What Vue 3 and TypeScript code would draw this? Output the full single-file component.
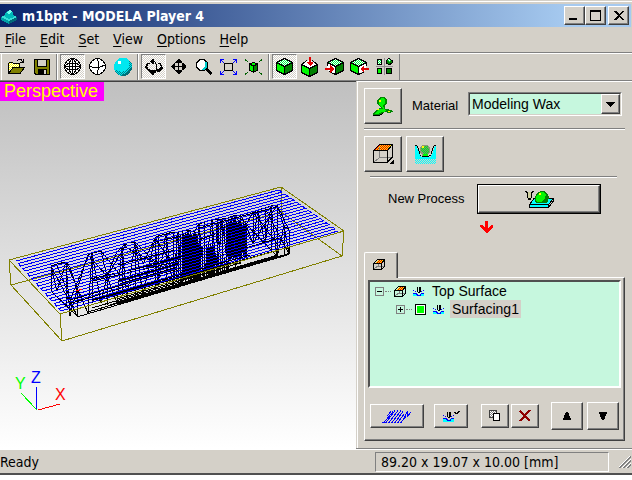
<script setup lang="ts">
import { h, ref } from 'vue'
import type { FunctionalComponent } from 'vue'

type Shape = [d: string, fill?: string, stroke?: string, width?: number]
interface IconDef { w: number; hgt: number; shapes: Shape[] }

const K = '#000'
const G = '#00f800'
const D = '#008000'

const cube: Shape[] = [
  ['M8 0L16 4V12L8 16L0 12V4Z', G],
  ['M8 8L16 4V12L8 16Z', D],
  ['M8 0L16 4L8 8L0 4Z', 'url(#dither-green)'],
  ['M8.5 .5L16.5 4.5V12.5L8.5 16.5L.5 12.5V4.5ZM.5 4.5L8.5 8.5L16.5 4.5M8.5 8.5V16', 'none', K],
]
const globe: Shape[] = [
  ['M7 .5H10L14 3L16.5 7V10L14 14L10 16.5H7L3 14L.5 10V7L3 3Z', '#fff', K],
]
const stockBox: Shape[] = [
  ['M1 5L5 1H12L9 5Z', 'url(#dither-red)'],
  ['M1 10L5 7H11M5 7V4', 'none', '#808080'],
  ['M.5 4.5L4.5 .5H11.5L8.5 4.5ZM.5 4.5V10.5H8.5V4.5M8.5 10.5L11.5 7.5V.5', 'none', K],
]
const toolCut: Shape[] = [
  ['M0 6H3L5 8H7L9 6H11V9H0Z', '#0ff'],
  ['M0 3.5H1M2 4.5H3M10 3.5H11M8 4.5H9M0 6.5H3L5 8.5H7L8.5 6.5H11', 'none', '#00f'],
  ['M4.5 0V5M5 5.5H7M7.5 0V5M6 0V5', 'none', K],
]

const icons: Record<string, IconDef> = {
  app: { w: 16, hgt: 16, shapes: [
    ['M0 9L7 6L16 9V12L8 16L0 12Z', '#00a0a8'], ['M0 9L7 6L16 9L8 13Z', '#38e0d8'],
    ['M3 8L5 4L9 2L12 5L13 9L8 11Z', '#00b8b8'], ['M5 5L9 2L11 4L8 6Z', '#70fff0'],
    ['M8 13V16L16 12V9Z', '#006878'],
  ] },
  open: { w: 17, hgt: 15, shapes: [
    ['M1 4H5L6 5H11V8H5L1 13Z', 'url(#dither-yellow)'], ['M5 9H16L12 14H1Z', '#808000'],
    ['M.5 14V4.5L1.5 3.5H4.5L5.5 4.5H11.5V8M.5 14.5L5 8.5H16.5L12 14.5ZM9 1.5L11 .5H13L15.5 3.5M15.5 0V4M12 3.5H16', 'none', K],
  ] },
  save: { w: 16, hgt: 16, shapes: [
    ['M0 0H16V16H1L0 15Z', K], ['M1 1H15V15H2L1 14Z', '#808000'], ['M3 0H13V8H3Z', K], ['M4 1H12V7H4Z', '#d4d0c8'],
    ['M4 10H13V16H4Z', K], ['M10 11H12V15H10Z', '#d4d0c8'],
  ] },
  globeWire: { w: 17, hgt: 17, shapes: [...globe,
    ['M8.5 0V17M0 8.5H17M8 1L5.5 4V13L8 16M9 1L11.5 4V13L9 16M1 8L4 5.5H13L16 8M1 9L4 11.5H13L16 9', 'none', K]] },
  globePlain: { w: 17, hgt: 17, shapes: [...globe,
    ['M8 1L9.5 4V10L8 16M1 8L4 9.5H10L16 7', 'none', K]] },
  sphere: { w: 18, hgt: 18, shapes: [
    ['M6 0H12L16 3L18 7V11L15 16L11 18H7L2 15L0 11V7L2 3Z', '#00e8f0'],
    ['M18 5V11L15 16L11 18H7L2 15L1 12L7 14L12 12L15 8V3Z', 'url(#dither-teal)'],
    ['M18 8V11L15 16L11 18H7L10 16L14 14L17 9Z', '#007078'], ['M4 3H7V6H4Z', '#fff'],
  ] },
  rotate: { w: 18, hgt: 16, shapes: [
    ['M3 5.5H2L.5 7.5V8.5L3 10.5L7 11.5H11L14 10.5L16.5 8.5V7.5L15 5.5M8 1.5L10.5 3.5L11.5 6V10L10.5 13L8 14.5', 'none', K],
    ['M3 6H2L1 8L4 11L7 12H11L14 11L17 8L16 6', 'none', K],
    ['M0 8H3V11H6V13H4L0 9ZM18 8H15V11H12V13H14L18 9ZM9 0V5H8L5 2.5L8 0ZM9 16V11H8L5 13.5L8 16Z', K],
    ['M2 4H5V5H2ZM13 4H16V5H13Z', K],
  ] },
  move: { w: 15, hgt: 15, shapes: [
    ['M7 2H8V13H7ZM2 7H13V8H2Z', K],
    ['M7 0H8L11 3V4H4V3ZM7 15H8L11 12V11H4V12ZM0 7V8L3 11H4V4H3ZM15 7V8L12 11H11V4H12Z', K],
    ['M4 4H6V6H4ZM9 4H11V6H9ZM4 9H6V11H4ZM9 9H11V11H9Z', '#d4d0c8']] },
  magnify: { w: 16, hgt: 16, shapes: [
    ['M4 .5H8L11.5 4V8L8 11.5H4L.5 8V4Z', '#fff', K], ['M9 3H11V8L8 11H5L9 8Z', '#0cc'],
    ['M11 9L16 13V15L14 16L10 12Z', K],
  ] },
  fit: { w: 17, hgt: 16, shapes: [
    ['M4.5 4.5H12.5V11.5H4.5Z', 'none', K],
    ['M.5 4V.5H4M1 1L4 4M13 .5H16.5V4M16 1L13 4M.5 12V15.5H4M1 15L4 12M13 15.5H16.5V12M16 15L13 12', 'none', '#00f'],
  ] },
  fitObject: { w: 17, hgt: 16, shapes: [
    ['M4 5L9 3L13 5V11L9 13L4 11Z', G], ['M9 7L13 5V11L9 13Z', D],
    ['M4.5 5L8.5 3.5L12.5 5V11L8.5 13.5L4.5 11ZM4.5 5L8.5 7L12.5 5M8.5 7V13', 'none', K],
    ['M0 1.5H2M.5 0V2M15 1.5H17M16.5 0V2M0 14.5H2M.5 14V16M15 14.5H17M16.5 14V16M2 2.5H3M14 2.5H15M2 13.5H3M14 13.5H15', 'none', '#006000'],
  ] },
  cube: { w: 17, hgt: 17, shapes: cube },
  cubeTop: { w: 17, hgt: 20, shapes: [
    ['M8 3L16 7V15L8 19L0 15V7Z', G], ['M8 11L16 7V15L8 19Z', D], ['M8 3L16 7L8 11L0 7Z', '#fff'],
    ['M6 3.5L.5 7.5V15.5L8.5 19.5L16.5 15.5V7.5L11 3.5M.5 7.5L8.5 11.5L16.5 7.5M8.5 11.5V19', 'none', K],
    ['M8 0H10V5H12V6L9 9L6 6V5H8Z', '#e00000'],
  ] },
  cubeFront: { w: 19, hgt: 17, shapes: [
    ['M10 0L18 4L10 8L2 4Z', 'url(#dither-green)'], ['M2 5L10 8V16L2 12Z', '#fff'], ['M10 8L18 4V12L10 16Z', D],
    ['M2.5 8V4.5L10.5 .5L18.5 4.5V12.5L10.5 16.5L4 13.5M2.5 4.5L10.5 8.5L18.5 4.5M10.5 8.5V16', 'none', K],
    ['M0 10H5V7L9 11L5 15V12H0Z', '#e00000'],
  ] },
  cubeSide: { w: 19, hgt: 17, shapes: [
    ['M8 0L16 4L8 8L0 4Z', 'url(#dither-green)'], ['M0 4L8 8V16L0 12Z', G], ['M8 8L16 4V12L8 16Z', '#fff'],
    ['M16.5 8V4.5L8.5 .5L.5 4.5V12.5L8.5 16.5L14 14M.5 4.5L8.5 8.5L16.5 4.5M8.5 8.5V16', 'none', K],
    ['M19 10H14V7L10 11L14 15V12H19Z', '#e00000'],
  ] },
  quad: { w: 17, hgt: 17, shapes: [
    ['M1.5 1.5H5.5V6.5H1.5Z', 'url(#dither-green)', K], ['M1.5 10.5H5.5V15.5H1.5Z', G, K], ['M10.5 10.5H15.5V15.5H10.5Z', D, K],
    ['M10.5 2.5L13 .5L16 2.5V5L13 7L10.5 5Z', D, K], ['M11 2L13 1L15 2L13 4Z', 'url(#dither-green)'],
    ['M8.5 0V17M0 8.5H17', 'none', '#909090'],
  ] },
  model: { w: 20, hgt: 19, shapes: [
    ['M0 17L4 12L8 11L7 9L4 7V3L7 0H11L14 3V6L12 9V12L19 13L20 15L16 16L11 15L9 17L4 19H0Z', '#008800'],
    ['M2 16L6 12H10L9 10L6 8V3L8 1H11L12 3V7L10 8L11 12L14 14L9 15L5 17H1Z', G],
    ['M6 3H8V5H6Z', '#ff0'], ['M4 12H6V13H4ZM15 14H17V15H15Z', '#ff0'], ['M0 18.5H6L10 16.5', 'none', K],
  ] },
  surface: { w: 21, hgt: 20, shapes: [
    ['M7 0H20L15 6H1Z', 'url(#dither-red)'], ['M6.5 3V13.5H19M6 14L1 18', 'none', '#808080'],
    ['M.5 6.5L6.5 .5H19.5L14.5 6.5ZM.5 6.5V18.5H14.5V6.5M14.5 18L19.5 13V.5', 'none', K],
    ['M21 15V20H16Z', K],
  ] },
  carve: { w: 21, hgt: 19, shapes: [
    ['M0 0H1L5 10H6V12H16V10H17L20 0H21V14H0Z', '#0ff'], ['M0 14H21V19H0Z', 'url(#dither-cyan)'],
    ['M7 0H13L15 3V7L13 10V12H7V10L5 7V3Z', '#909878'], ['M8 1H13L14 4V7L11 10L6 6V3Z', 'url(#dither-leaf)'],
    ['M8 9H13V12H8Z', G], ['M7 1H9V3H7Z', '#ff0'],
    ['M0 .5H2M2.5 1V3M3.5 3V6M4.5 6V9M5 10.5H6M6.5 11H14M14 10.5H16M16.5 6V9M17.5 3V6M18.5 1V3M19 .5H21', 'none', K],
  ] },
  newProcess: { w: 29, hgt: 17, shapes: [
    ['M4 13L9 8H28L24 13V16H4Z', '#0ff'],
    ['M4.5 13.5L9 7.5H28.5V10L23.5 16.5H4.5ZM4 13.5H23.5V16M24 13L28 8', 'none', K],
    ['M10 11V6L12 2L16 0H19L22 2L24 6L23 11L20 12H12Z', D],
    ['M11 9V6L13 3L16 1H19L21 4L20 7L16 11H12Z', G], ['M14 2H16V4H14Z', '#ff0'],
    ['M2 1H7V7H5L3 8Z', '#d0d0a0'], ['M0 .5H2M7 .5H9M2.5 1V7M6.5 1V7M3 7.5H6M1 1.5H2M7 1.5H8M3 8.5H6', 'none', K],
  ] },
  arrow: { w: 13, hgt: 12, shapes: [['M5 0H8V7L11 4H13V6L7 12H6L0 6V4H2L5 7Z', '#f00']] },
  stock: { w: 12, hgt: 11, shapes: stockBox },
  cut: { w: 11, hgt: 9, shapes: toolCut },
  path: { w: 30, hgt: 13, shapes: [
    ['M0 12.5H2L11 1.5M3 12.5H4L13 .5M6 12.5H7L16 .5M9 12.5H10L19 .5M12 12.5H13L21 1.5M15 12.5H16L22 4M18 12.5H19L22 8.5L24 6.5M22 7.5L25 2.5V7L29 2M5 6L9 1.5', 'none', '#00f']] },
  cutCheck: { w: 17, hgt: 12, shapes: [
    ['M0 8H3L5 10H7L9 8H11V12H0Z', '#0ff'],
    ['M0 5.5H1M2 6.5H3M10 5.5H11M8 6.5H9M0 8.5H3L5 10.5H7L8.5 8.5H11', 'none', '#00f'],
    ['M4.5 2V7M5 7.5H7M7.5 2V7M6 2V7', 'none', K], ['M11 2H12L13 3L15 1H17L14 4H12L11 3Z', K],
  ] },
  copy: { w: 12, hgt: 12, shapes: [['M.5 .5H7.5V7.5H.5Z', 'url(#dither-dark)', '#404040'], ['M4.5 3.5H10.5V10.5H4.5Z', '#fff', K]] },
  remove: { w: 12, hgt: 12, shapes: [['M1 1L11 11M11 0L1 11', 'none', '#900000', 2]] },
  up: { w: 8, hgt: 8, shapes: [['M3 0H5L8 7V8H0V7Z', K]] },
  down: { w: 8, hgt: 8, shapes: [['M3 8H5L8 1V0H0V1Z', K]] },
  drop: { w: 9, hgt: 5, shapes: [['M0 0H9L5 5H4Z', K]] },
  min: { w: 8, hgt: 9, shapes: [['M0 7H8V9H0Z', K]] },
  max: { w: 11, hgt: 11, shapes: [['M.5 .5H10.5V10.5H.5Z', 'none', K], ['M0 0H11V2H0Z', K]] },
  close: { w: 10, hgt: 9, shapes: [['M0 0H2L5 3L8 0H10V1L6 4V5L10 8V9H8L5 6L2 9H0V8L4 5V4L0 1Z', K]] },
  grip: { w: 12, hgt: 12, shapes: [
    ['M0 12L12 0M4 12L12 4M8 12L12 8', 'none', '#808080', 2], ['M-1 12L12 -1M3 12L12 3M7 12L12 7', 'none', '#fff', 1]] },
}

const Icon: FunctionalComponent<{ name: string }> = ({ name }) => {
  const def = icons[name]
  return h('svg', { width: def.w, height: def.hgt, viewBox: `0 0 ${def.w} ${def.hgt}`, class: 'icon', 'aria-hidden': 'true' },
    def.shapes.map(([d, fill = 'none', stroke, width = 1]) =>
      h('path', { d, fill, stroke: stroke ?? 'none', 'stroke-width': width })))
}
Icon.props = ['name']

const menus = ['File', 'Edit', 'Set', 'View', 'Options', 'Help']

interface Tool { icon: string; label: string; on?: boolean }
const toolGroups: Tool[][] = [
  [{ icon: 'open', label: 'Open' }, { icon: 'save', label: 'Save' }],
  [{ icon: 'globeWire', label: 'Wireframe', on: true }, { icon: 'globePlain', label: 'Hidden line' }, { icon: 'sphere', label: 'Shaded' }],
  [{ icon: 'rotate', label: 'Rotate', on: true }, { icon: 'move', label: 'Move' }, { icon: 'magnify', label: 'Zoom' },
    { icon: 'fit', label: 'Fit table' }, { icon: 'fitObject', label: 'Fit object' }],
  [{ icon: 'cube', label: 'Perspective view', on: true }, { icon: 'cubeTop', label: 'Top view' }, { icon: 'cubeFront', label: 'Front view' },
    { icon: 'cubeSide', label: 'Side view' }, { icon: 'quad', label: 'All views' }],
]

const material = ref('Modeling Wax')
const enabled = ref(true)

type Pt = [number, number]
const lerp = (a: Pt, b: Pt, t: number): Pt => [a[0] + (b[0] - a[0]) * t, a[1] + (b[1] - a[1]) * t]

// Back-and-forth finishing pass over the top face.
function toolPath(count: number): string {
  const out: string[] = []
  for (let i = 0; i < count; i++) {
    const t = i / (count - 1)
    const l = lerp([16, 261], [61, 311], t)
    const r = lerp([279, 190], [338, 231], t)
    const ends = i % 2 ? [r, l] : [l, r]
    out.push(...ends.map((p) => p.map((n) => n.toFixed(1)).join(' ')))
  }
  return 'M' + out.join('L')
}
const bluePath = toolPath(21)

// Lower edge of the relief at a given x.
const base = (x: number): number => Math.round(317 - (x - 77) * 0.295)

// Triangulated relief: columns of [x, top, bottom].
const columns: number[][] = [
  [51, 266, 291], [57, 264, 291], [66, 262, 307], [70, 267, 316], [77, 289, 316], [88, 255, 313], [92, 253, 303], [101, 251, 303],
  [107, 276, 305], [117, 252, 303], [122, 247, 296], [127, 243, 298], [135, 242, 297], [143, 264, 295], [155, 238, 291],
  [158, 236, 285], [166, 234, 288], [173, 232, 288], [178, 232, 288], [182, 231, 285], [188, 230, 284], [194, 232, 282],
  [199, 224, 281], [204, 222, 279], [212, 220, 277], [217, 219, 275], [222, 219, 272], [228, 218, 269], [235, 215, 268],
  [240, 215, 264], [246, 225, 260], [253, 212, 243], [258, 210, 240], [265, 208, 244], [271, 206, 250], [277, 205, 257], [284, 226, 254], [289, 230, 254],
]
function meshPath(): string {
  const seg: string[] = []
  columns.forEach(([x, top, bottom], i) => {
    if (i % 2 === 0 || x > 150) seg.push(`M${x}.5 ${top}V${bottom}`)
    const next = columns[i + 1]
    if (!next) return
    seg.push(`M${x} ${top}L${next[0]} ${next[1]}`)
    seg.push(i % 2 ? `M${x} ${bottom}L${next[0]} ${next[1]}` : `M${x} ${top}L${next[0]} ${next[2]}`)
  })
  return seg.join('')
}

// Curved bodies of the relief, where facets are only a pixel or two wide: [from, to, top, height, step].
const dense: number[][] = [
  [176, 182, 234, 50, 2], [183, 197, 232, 50, 1], [198, 206, 242, 38, 2], [206, 214, 244, 34, 1],
  [216, 224, 221, 24, 2], [226, 237, 219, 42, 1], [238, 246, 221, 36, 1], [216, 226, 254, 20, 2],
]
function densePath(): string {
  const seg: string[] = []
  for (const [from, to, top, height, step] of dense) {
    for (let x = from; x <= to; x += step) {
      const k = (x * 7) % 5
      seg.push(`M${x}.5 ${top + k}V${Math.min(top + height - k, base(x))}`)
    }
  }
  return seg.join('')
}
const mesh = meshPath() + densePath()
const rails = 'M70 300L180 268L279 238M72 303L180 270M90 279L180 259M92 281L180 261M100 278L178 257M77 317L289 254'
  + 'M88 312L200 279M117 302L278 255M89 303L289 247M90 300L250 255M110 305L278 256M117 299L240 263M92 308L180 282'
  + 'M51 266L77 316M57 265L76 314M66 262L88 313M51 291L77 316M88 255L107 276L127 243M101 251L121 276M135 242L155 262M155 238L173 265'
  + 'M235 215L253 243L277 205M240 218L278 257M265 208L289 254M253 212L278 245M289 230V254L278 257M277 205L289 230M88 257L70 300'
  + 'M125 247L155 263M118 265L175 250M155 242L180 236M199 228L246 215L277 207M199 240L225 230'
const spineRails = 'M118 281L178 264M120 284L176 268M92 300L190 274M117 304L210 277L289 254M150 267L200 250'
</script>

<template>
  <div class="window">
    <svg class="defs" aria-hidden="true">
      <defs>
        <pattern v-for="[id, a, b] in [
          ['green', '#ffffff', '#00f848'], ['yellow', '#ffff00', '#ffffff'], ['red', '#e80000', '#ffe800'],
          ['cyan', '#00ffff', '#d4d0c8'], ['teal', '#00e8f0', '#008088'], ['leaf', '#00e030', '#70a058'], ['dark', '#808080', '#ffffff'],
        ]" :id="`dither-${id}`" :key="id" width="2" height="2" patternUnits="userSpaceOnUse">
          <rect width="2" height="2" :fill="a" />
          <path d="M0 0h1v1h-1zM1 1h1v1h-1z" :fill="b" />
        </pattern>
      </defs>
    </svg>

    <header class="titlebar">
      <Icon name="app" />
      <h1>m1bpt - MODELA Player 4</h1>
      <div class="caption">
        <button type="button" class="raised cap cap-min" aria-label="Minimize"><Icon name="min" /></button>
        <button type="button" class="raised cap" aria-label="Maximize"><Icon name="max" /></button>
        <button type="button" class="raised cap cap-close" aria-label="Close"><Icon name="close" /></button>
      </div>
    </header>

    <nav class="menubar">
      <button v-for="m in menus" :key="m" type="button"><u>{{ m[0] }}</u>{{ m.slice(1) }}</button>
    </nav>

    <div class="toolbar" role="toolbar">
      <div v-for="(group, i) in toolGroups" :key="i" class="group">
        <button v-for="t in group" :key="t.icon" type="button" :class="{ on: t.on }" :aria-label="t.label"><Icon :name="t.icon" /></button>
      </div>
    </div>

    <main class="work">
      <section class="viewport">
        <span class="view-name">Perspective</span>
        <svg class="scene" viewBox="0 82 356 366" preserveAspectRatio="xMinYMin meet" role="img" aria-label="Model">
          <g fill="none" stroke-width="1">
            <path stroke="#808000" d="M11 285L281 212L342 256M281.5 187V212" />
            <path stroke="#000" :d="mesh" />
            <path stroke="#000" :d="rails" />
            <path stroke="#000" stroke-width="2" :d="spineRails" />
            <path stroke="#00f" :d="bluePath" />
            <path stroke="#808000" d="M9 260L281 187L344 231L60 314ZM9 260L11 285L62 341L342 256L344 231M60 314L62 341" />
            <path stroke="#f00" d="M76 291L82 289" />
            <path stroke="#00f" d="M36.5 410V387" />
            <path stroke="#0f0" d="M37 410L21 393" />
            <path stroke="#f00" d="M38 410L60 404" />
          </g>
          <text x="55" y="400" fill="#f00">X</text>
          <text x="15" y="389" fill="#0f0">Y</text>
          <text x="31" y="383" fill="#00f">Z</text>
        </svg>
      </section>

      <section class="panel">
        <div class="row material">
          <button type="button" class="raised tile" aria-label="Model"><Icon name="model" /></button>
          <label for="material">Material</label>
          <div class="combo">
            <select id="material" v-model="material"><option>Modeling Wax</option></select>
            <span class="raised combo-arrow"><Icon name="drop" /></span>
          </div>
        </div>
        <hr>
        <div class="row sides">
          <button type="button" class="raised tile" aria-label="Surface"><Icon name="surface" /></button>
          <button type="button" class="raised tile" aria-label="Cutting area"><Icon name="carve" /></button>
        </div>
        <hr class="short">
        <div class="row process">
          <label for="new-process">New Process</label>
          <button id="new-process" type="button" class="new-process"><span class="raised"><Icon name="newProcess" /></span></button>
        </div>
        <div class="flow-arrow"><Icon name="arrow" /></div>

        <button type="button" class="tab" role="tab" aria-selected="true" aria-label="Top Surface"><Icon name="stock" /></button>
        <div class="page">
          <ul class="tree" role="tree">
            <li role="treeitem">
              <button type="button" class="toggle minus" aria-label="Collapse"></button>
              <i class="dots"></i>
              <Icon name="stock" /><Icon name="cut" />
              <span class="node">Top Surface</span>
            </li>
            <li role="treeitem" class="child">
              <button type="button" class="toggle" aria-label="Expand"></button>
              <i class="dots"></i>
              <input v-model="enabled" type="checkbox" aria-label="Surfacing1">
              <Icon name="cut" />
              <span class="node selected">Surfacing1</span>
            </li>
          </ul>
          <div class="actions">
            <button type="button" class="raised wide" aria-label="Preview"><Icon name="path" /></button>
            <button type="button" class="raised mid" aria-label="Edit process"><Icon name="cutCheck" /></button>
            <div class="pair">
              <button type="button" class="raised small" aria-label="Copy"><Icon name="copy" /></button>
              <button type="button" class="raised small" aria-label="Delete"><Icon name="remove" /></button>
            </div>
            <div class="pair order">
              <button type="button" class="raised tall" aria-label="Move up"><Icon name="up" /></button>
              <button type="button" class="raised tall" aria-label="Move down"><Icon name="down" /></button>
            </div>
          </div>
        </div>
      </section>
    </main>

    <footer class="status">
      <span>Ready</span>
      <span class="pane">89.20 x 19.07 x 10.00 [mm]</span>
      <Icon name="grip" />
    </footer>
  </div>
</template>

<style>
body { background: #fff; }
</style>

<style scoped>
* { box-sizing: border-box; }
.window {
  display: grid;
  grid-template-rows: 23px 25px 29px 1fr 26px;
  min-height: calc(100vh - 5px);
  padding-top: 4px;
  background: linear-gradient(#d4d0c8 1px, #fff 1px, #fff 2px, #d4d0c8 2px);
  color: #000;
  font-family: "DejaVu Sans Condensed", "DejaVu Sans", sans-serif;
  font-size: 14px;
}
.defs { position: absolute; width: 0; height: 0; }
.icon { display: block; flex: none; shape-rendering: crispEdges; }
button { padding: 0; border: 0; background: none; font: inherit; color: inherit; }
.raised {
  display: flex;
  align-items: center;
  justify-content: center;
  background: #d4d0c8;
  border: 1px solid;
  border-color: #fff #404040 #404040 #fff;
  box-shadow: inset -1px -1px #808080;
}
.titlebar {
  display: flex;
  align-items: center;
  margin-right: 1px;
  padding: 0 2px 0 1px;
  gap: 5px;
  background: linear-gradient(90deg, #0a246a, #a6caf0 90%);
  color: #fff;
}
.titlebar h1 { margin: 0; flex: 1; font-size: 14px; line-height: 20px; font-weight: bold; white-space: nowrap; }
.caption { display: flex; }
.cap { width: 21px; height: 19px; }
.cap-min { padding-right: 3px; }
.cap-close { margin-left: 2px; }
.menubar { display: flex; align-items: center; gap: 14px; padding: 0 0 2px 5px; line-height: 20px; }
.menubar u { text-underline-offset: 2px; }
.toolbar {
  display: flex;
  border-top: 1px solid #808080;
  border-bottom: 1px solid #808080;
  box-shadow: inset 0 1px #fff;
  padding: 1px 0 0 1px;
}
.group { display: flex; padding: 0 2px; border-right: 1px solid #808080; border-left: 1px solid #fff; }
.toolbar button { display: flex; align-items: center; justify-content: center; width: 25px; height: 25px; border: 1px solid transparent; }
.toolbar .on {
  border-color: #808080 #fff #fff #808080;
  background: repeating-conic-gradient(#fff 0 25%, #d4d0c8 0 50%) 0 0 / 2px 2px;
}
.work { display: grid; grid-template-columns: 1fr 275px; min-height: 0; }
.viewport {
  position: relative;
  margin-right: 1px;
  border-top: 1px solid #404040;
  background: linear-gradient(#c0c0c0, #fff);
}
.view-name {
  position: absolute;
  top: 0;
  left: 0;
  padding: 0 6px 0 4px;
  background: #f0f;
  color: #ff0;
  font: 18px/19px "Liberation Sans", sans-serif;
}
.scene { display: block; width: 100%; shape-rendering: crispEdges; font: 16px "Liberation Sans", sans-serif; }
.panel {
  display: flex;
  flex-direction: column;
  padding: 6px 7px 8px 6px;
  border-left: 1px solid #fff;
  border-top: 1px solid #fff;
  font: 13px/18px "Liberation Sans", sans-serif;
}
.row { display: flex; align-items: center; }
.tile { width: 38px; height: 36px; }
.material label { margin-left: 10px; width: 56px; }
.combo {
  position: relative;
  flex: 1;
  display: flex;
  height: 24px;
  margin: 0 3px 4px 0;
  border: 1px solid;
  border-color: #808080 #fff #fff #808080;
}
.combo select {
  appearance: none;
  width: 100%;
  padding: 0 20px 0 2px;
  border: 1px solid;
  border-color: #404040 #d4d0c8 #d4d0c8 #404040;
  border-radius: 0;
  background: #c6f7de;
  color: #000;
  font: 14px/18px "Liberation Sans", sans-serif;
}
.combo-arrow { position: absolute; top: 1px; right: 1px; width: 19px; height: 20px; pointer-events: none; }
hr { width: 100%; height: 2px; margin: 4px 0 6px; border: 0; border-top: 1px solid #808080; border-bottom: 1px solid #fff; }
.sides { gap: 4px; }
.short { width: auto; margin: 4px 8px 6px 6px; }
.process { padding: 0 24px 0 24px; gap: 10px; }
.process label { width: 79px; white-space: nowrap; }
.new-process { display: flex; flex: 1; height: 30px; border: 1px solid #000; }
.new-process .raised { width: 100%; height: 100%; }
.flow-arrow { padding: 7px 0 0 116px; height: 38px; }
.tab {
  position: relative;
  display: flex;
  justify-content: center;
  align-items: center;
  width: 34px;
  height: 26px;
  margin-bottom: -1px;
  padding: 0 4px 3px 0;
  border: 1px solid;
  border-color: #fff #404040 transparent #fff;
  border-bottom: 0;
  border-radius: 2px 2px 0 0;
  box-shadow: inset -1px 0 #808080;
  background: #d4d0c8;
}
.page {
  display: flex;
  flex: 1;
  flex-direction: column;
  padding: 2px 3px 10px;
  border: 1px solid;
  border-color: #fff #404040 #404040 #fff;
  box-shadow: inset -1px -1px #808080;
}
.tree {
  flex: 1;
  margin: 0;
  padding: 0 0 0 5px;
  list-style: none;
  border: 2px solid;
  border-color: #505050 #fff #fff #505050;
  background: #c6f7de;
}
.tree li { display: flex; align-items: center; height: 18px; }
.tree .child { padding-left: 21px; }
.toggle {
  width: 9px;
  height: 9px;
  border: 1px solid #808080;
  background: linear-gradient(#000, #000) center / 5px 1px no-repeat, linear-gradient(#000, #000) center / 1px 5px no-repeat;
}
.minus { background: linear-gradient(#000, #000) center / 5px 1px no-repeat; }
.dots { width: 6px; margin: 0 3px 0 1px; border-top: 1px dotted #808080; }
.tree .icon + .icon, input + .icon { margin-left: 7px; }
.tree input {
  appearance: none;
  width: 11px;
  height: 11px;
  margin: 0;
  border: 1px solid #000;
  background: #fff;
}
.tree input:checked { background: linear-gradient(#0f0, #0f0) center / 7px 7px no-repeat #fff; }
.node { margin-left: 6px; padding: 0 2px; font-size: 14px; line-height: 18px; }
.selected { background: #d4d0c8; }
.actions { display: flex; align-items: center; padding: 14px 2px 0; gap: 10px; }
.wide { width: 54px; height: 24px; }
.mid { width: 34px; height: 24px; }
.pair { display: flex; gap: 2px; margin-left: 3px; }
.small { width: 28px; height: 24px; }
.order { gap: 4px; margin-left: 2px; }
.tall { width: 32px; height: 28px; }
.status {
  display: flex;
  align-items: center;
  padding: 2px 1px 1px 0;
  border-top: 1px solid #fff;
  border-bottom: 2px solid #505050;
  box-shadow: 0 -1px #808080;
  line-height: 18px;
}
.status > span:first-child { flex: 1; }
.pane { width: 234px; height: 20px; margin-right: 10px; padding-left: 5px; border: 1px solid; border-color: #808080 #fff #fff #808080; }
</style>
